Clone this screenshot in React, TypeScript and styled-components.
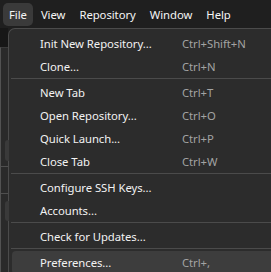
import styled, { createGlobalStyle } from 'styled-components';

type Entry =
  | { kind: 'item'; label: string; shortcut?: string; active?: boolean }
  | { kind: 'sep' };

const entries: Entry[] = [
  { kind: 'item', label: 'Init New Repository...', shortcut: 'Ctrl+Shift+N' },
  { kind: 'item', label: 'Clone...', shortcut: 'Ctrl+N' },
  { kind: 'sep' },
  { kind: 'item', label: 'New Tab', shortcut: 'Ctrl+T' },
  { kind: 'item', label: 'Open Repository...', shortcut: 'Ctrl+O' },
  { kind: 'item', label: 'Quick Launch...', shortcut: 'Ctrl+P' },
  { kind: 'item', label: 'Close Tab', shortcut: 'Ctrl+W' },
  { kind: 'sep' },
  { kind: 'item', label: 'Configure SSH Keys...' },
  { kind: 'item', label: 'Accounts...' },
  { kind: 'sep' },
  { kind: 'item', label: 'Check for Updates...' },
  { kind: 'sep' },
  { kind: 'item', label: 'Preferences...', shortcut: 'Ctrl+,', active: true },
];

const menus = ['File', 'View', 'Repository', 'Window', 'Help'];

export default function App(): JSX.Element {
  return (
    <>
      <GlobalStyle />
      <Window>
        <MenuBar>
          {menus.map((m, i) => (
            <MenuButton key={m} $open={i === 0}>
              {m}
            </MenuButton>
          ))}
        </MenuBar>
        <Body>
          <Backdrop>
            <BackdropTop />
            <SidePanel>
              <PanelLine $top={118} />
              <ScrollThumb $top={92} $height={21} />
              <PanelLine $top={145} />
              <ScrollThumb $top={153} $height={20} />
            </SidePanel>
          </Backdrop>
          <Dropdown>
            {entries.map((e, i) =>
              e.kind === 'sep' ? (
                <Separator key={i} />
              ) : (
                <Item key={i} $active={e.active}>
                  <Label>{e.label}</Label>
                  <Shortcut>{e.shortcut}</Shortcut>
                </Item>
              )
            )}
          </Dropdown>
        </Body>
      </Window>
    </>
  );
}

const GlobalStyle = createGlobalStyle`
  html, body {
    margin: 0;
    padding: 0;
    background: #1e1e1e;
    overflow: hidden;
  }
`;

const Window = styled.div`
  width: 271px;
  height: 272px;
  overflow: hidden;
  display: flex;
  flex-direction: column;
  font-family: 'Noto Sans', 'Open Sans', sans-serif;
  font-size: 11.3px;
  letter-spacing: -0.05px;
  color: #f2f2f2;
  background: #1e1e1e;
`;

const MenuBar = styled.div`
  height: 28px;
  flex: none;
  display: flex;
  align-items: center;
  gap: 2px;
  padding-left: 3px;
  background: #1f1f1f;
`;

const MenuButton = styled.div<{ $open?: boolean }>`
  height: 23px;
  padding: 0 6px;
  display: flex;
  align-items: center;
  border-radius: 5px;
  background: ${(p) => (p.$open ? '#3a3a3a' : 'transparent')};
  color: #f5f5f5;
`;

const Body = styled.div`
  flex: 1;
  display: flex;
  min-height: 0;
`;

const Backdrop = styled.div`
  width: 8px;
  flex: none;
  display: flex;
  flex-direction: column;
`;

const BackdropTop = styled.div`
  height: 19px;
  flex: none;
  background: #171717;
`;

const SidePanel = styled.div`
  position: relative;
  flex: 1;
  background: #2a2a2a;
  border-left: 1px solid #525252;
  border-top: 1px solid #3a3a3a;
`;

const PanelLine = styled.div<{ $top: number }>`
  position: absolute;
  left: 0;
  right: 0;
  top: ${(p) => p.$top}px;
  height: 1px;
  background: #4f4f4f;
`;

const ScrollThumb = styled.div<{ $top: number; $height: number }>`
  position: absolute;
  left: 4px;
  width: 4px;
  top: ${(p) => p.$top}px;
  height: ${(p) => p.$height}px;
  border-radius: 3px 0 0 3px;
  background: #3a3a3a;
`;

const Dropdown = styled.div`
  width: 300px;
  flex: none;
  padding-top: 3px;
  background: #2c2c2c;
  border-top: 1px solid #4b4b4b;
  border-left: 1px solid #4b4b4b;
  border-top-left-radius: 7px;
`;

const Item = styled.div<{ $active?: boolean }>`
  height: 23px;
  margin: 0 3px;
  padding-left: 28px;
  display: grid;
  grid-template-columns: 142px auto;
  align-items: center;
  border-radius: 4px;
  background: ${(p) => (p.$active ? '#3d3d3d' : 'transparent')};
`;

const Label = styled.span`
  color: #f2f2f2;
  white-space: nowrap;
`;

const Shortcut = styled.span`
  color: #a3a3a3;
  white-space: nowrap;
`;

const Separator = styled.div`
  height: 1px;
  margin: 0 0 2px 2px;
  background: #4b4b4b;
`;
